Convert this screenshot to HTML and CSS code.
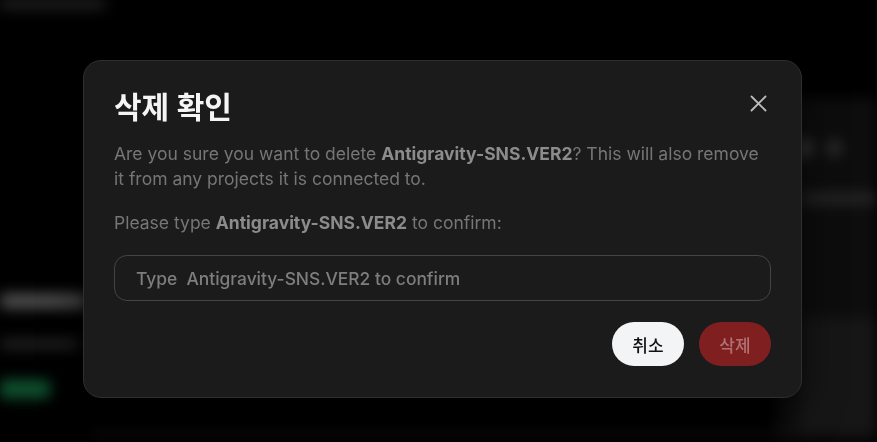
FILE: index.html
```html
<!DOCTYPE html>
<html lang="ko">
<head>
    <meta charset="UTF-8">
    <meta name="viewport" content="width=device-width, initial-scale=1.0">
    <title>삭제 확인</title>
    <link rel="stylesheet" href="styles.css">
</head>
<body>
    <!-- page behind the dialog, blurred -->
    <div class="backdrop" aria-hidden="true">
        <div class="top-line"></div>
        <div class="page">
            <div class="side">
                <div class="bar bar-title"></div>
                <div class="bar bar-sub"></div>
                <div class="badge"></div>
            </div>
            <div class="main-col"></div>
            <div class="right-col">
                <div class="icons"><span class="dot"></span><span class="dot small"></span></div>
                <div class="bar bar-right"></div>
                <div class="right-card"></div>
            </div>
        </div>
    </div>

    <div class="overlay">
        <div class="modal" role="dialog">
            <div class="modal-head">
                <h2>삭제 확인</h2>
                <button class="btn-close" aria-label="닫기">
                    <svg width="17" height="17" viewBox="0 0 17 17" fill="none" stroke="currentColor" stroke-width="1.8" stroke-linecap="round">
                        <path d="M1.5 1.5L15.5 15.5M15.5 1.5L1.5 15.5"/>
                    </svg>
                </button>
            </div>
            <p class="desc">Are you sure you want to delete <b>Antigravity-SNS.VER2</b>? This will also remove it from any projects it is connected to.</p>
            <p class="desc desc-confirm">Please type <b>Antigravity-SNS.VER2</b> to confirm:</p>
            <input class="confirm-input" type="text" placeholder="Type  Antigravity-SNS.VER2 to confirm">
            <div class="actions">
                <button class="btn btn-cancel">취소</button>
                <button class="btn btn-delete" disabled>삭제</button>
            </div>
        </div>
    </div>
</body>
</html>
```

FILE: styles.css
```css
* {
    box-sizing: border-box;
}
body {
    margin: 0;
    width: 877px;
    height: 442px;
    overflow: hidden;
    background-color: #000;
    font-family: Inter, "Noto Sans CJK KR", sans-serif;
}

/* blurred page behind */
.backdrop {
    height: 100%;
    filter: blur(7px);
}
.top-line {
    width: 105px;
    height: 8px;
    background-color: #2a2a2a;
}
.page {
    display: grid;
    grid-template-columns: 90px 1fr 100px;
    height: 434px;
    padding-top: 90px;
}
.side {
    padding-top: 196px;
}
.bar {
    border-radius: 4px;
}
.bar-title {
    width: 88px;
    height: 14px;
    background-color: #555;
}
.bar-sub {
    margin-top: 32px;
    width: 80px;
    height: 8px;
    background-color: #2c2c2c;
}
.badge {
    margin-top: 32px;
    width: 50px;
    height: 18px;
    background-color: #0f5431;
}
.main-col {
    margin-top: 330px;
    background-color: #070707;
}
.right-col {
    background-color: #0d0d0d;
    padding: 40px 0 0 22px;
}
.icons {
    display: flex;
    gap: 16px;
    align-items: center;
}
.dot {
    width: 12px;
    height: 20px;
    border-radius: 50%;
    background-color: #444;
}
.dot.small {
    width: 14px;
    height: 16px;
    background-color: #333;
}
.bar-right {
    margin-top: 36px;
    width: 78px;
    height: 9px;
    background-color: #2c2c2c;
}
.right-card {
    margin-top: 115px;
    height: 115px;
    background-color: #161616;
}

/* dialog */
.overlay {
    position: fixed;
    inset: 0;
    padding: 60px 0 0 83px;
}
.modal {
    width: 719px;
    padding: 27px 30px 31px;
    background-color: #1b1b1b;
    border: 1px solid #2f2f2f;
    border-radius: 18px;
    box-shadow: 0 10px 40px rgba(0, 0, 0, 0.6);
}
.modal-head {
    display: flex;
    justify-content: space-between;
    align-items: flex-start;
}
.modal-head h2 {
    margin: 0;
    font-size: 30px;
    line-height: 38px;
    font-weight: 600;
    color: #f5f5f5;
}
.btn-close {
    margin: 7px 4px 0 0;
    padding: 0;
    border: none;
    background: none;
    color: #bdbdbd;
    cursor: pointer;
}
.desc {
    margin: 15px 0 0;
    font-size: 17.5px;
    line-height: 25px;
    color: #767676;
}
.desc-confirm {
    margin-top: 19px;
}
.desc b {
    font-weight: 700;
    color: #8c8c8c;
}
.confirm-input {
    display: block;
    width: 100%;
    height: 46px;
    margin-top: 20px;
    padding: 0 21px;
    border: 1px solid #444;
    border-radius: 13px;
    background-color: transparent;
    font-family: Inter, sans-serif;
    font-size: 17.4px;
    font-weight: 500;
    color: #ddd;
    outline: none;
}
.confirm-input::placeholder {
    color: #7e7e7e;
}
.actions {
    display: flex;
    justify-content: flex-end;
    gap: 15px;
    margin-top: 21px;
}
.btn {
    width: 72px;
    height: 44px;
    border: none;
    border-radius: 22px;
    font-family: Inter, "Noto Sans CJK KR", sans-serif;
    font-size: 17px;
    font-weight: 500;
    cursor: pointer;
}
.btn-cancel {
    background-color: #f2f4f5;
    color: #111;
}
.btn-delete {
    background-color: #7f1f1f;
    color: #b07373;
}
```
